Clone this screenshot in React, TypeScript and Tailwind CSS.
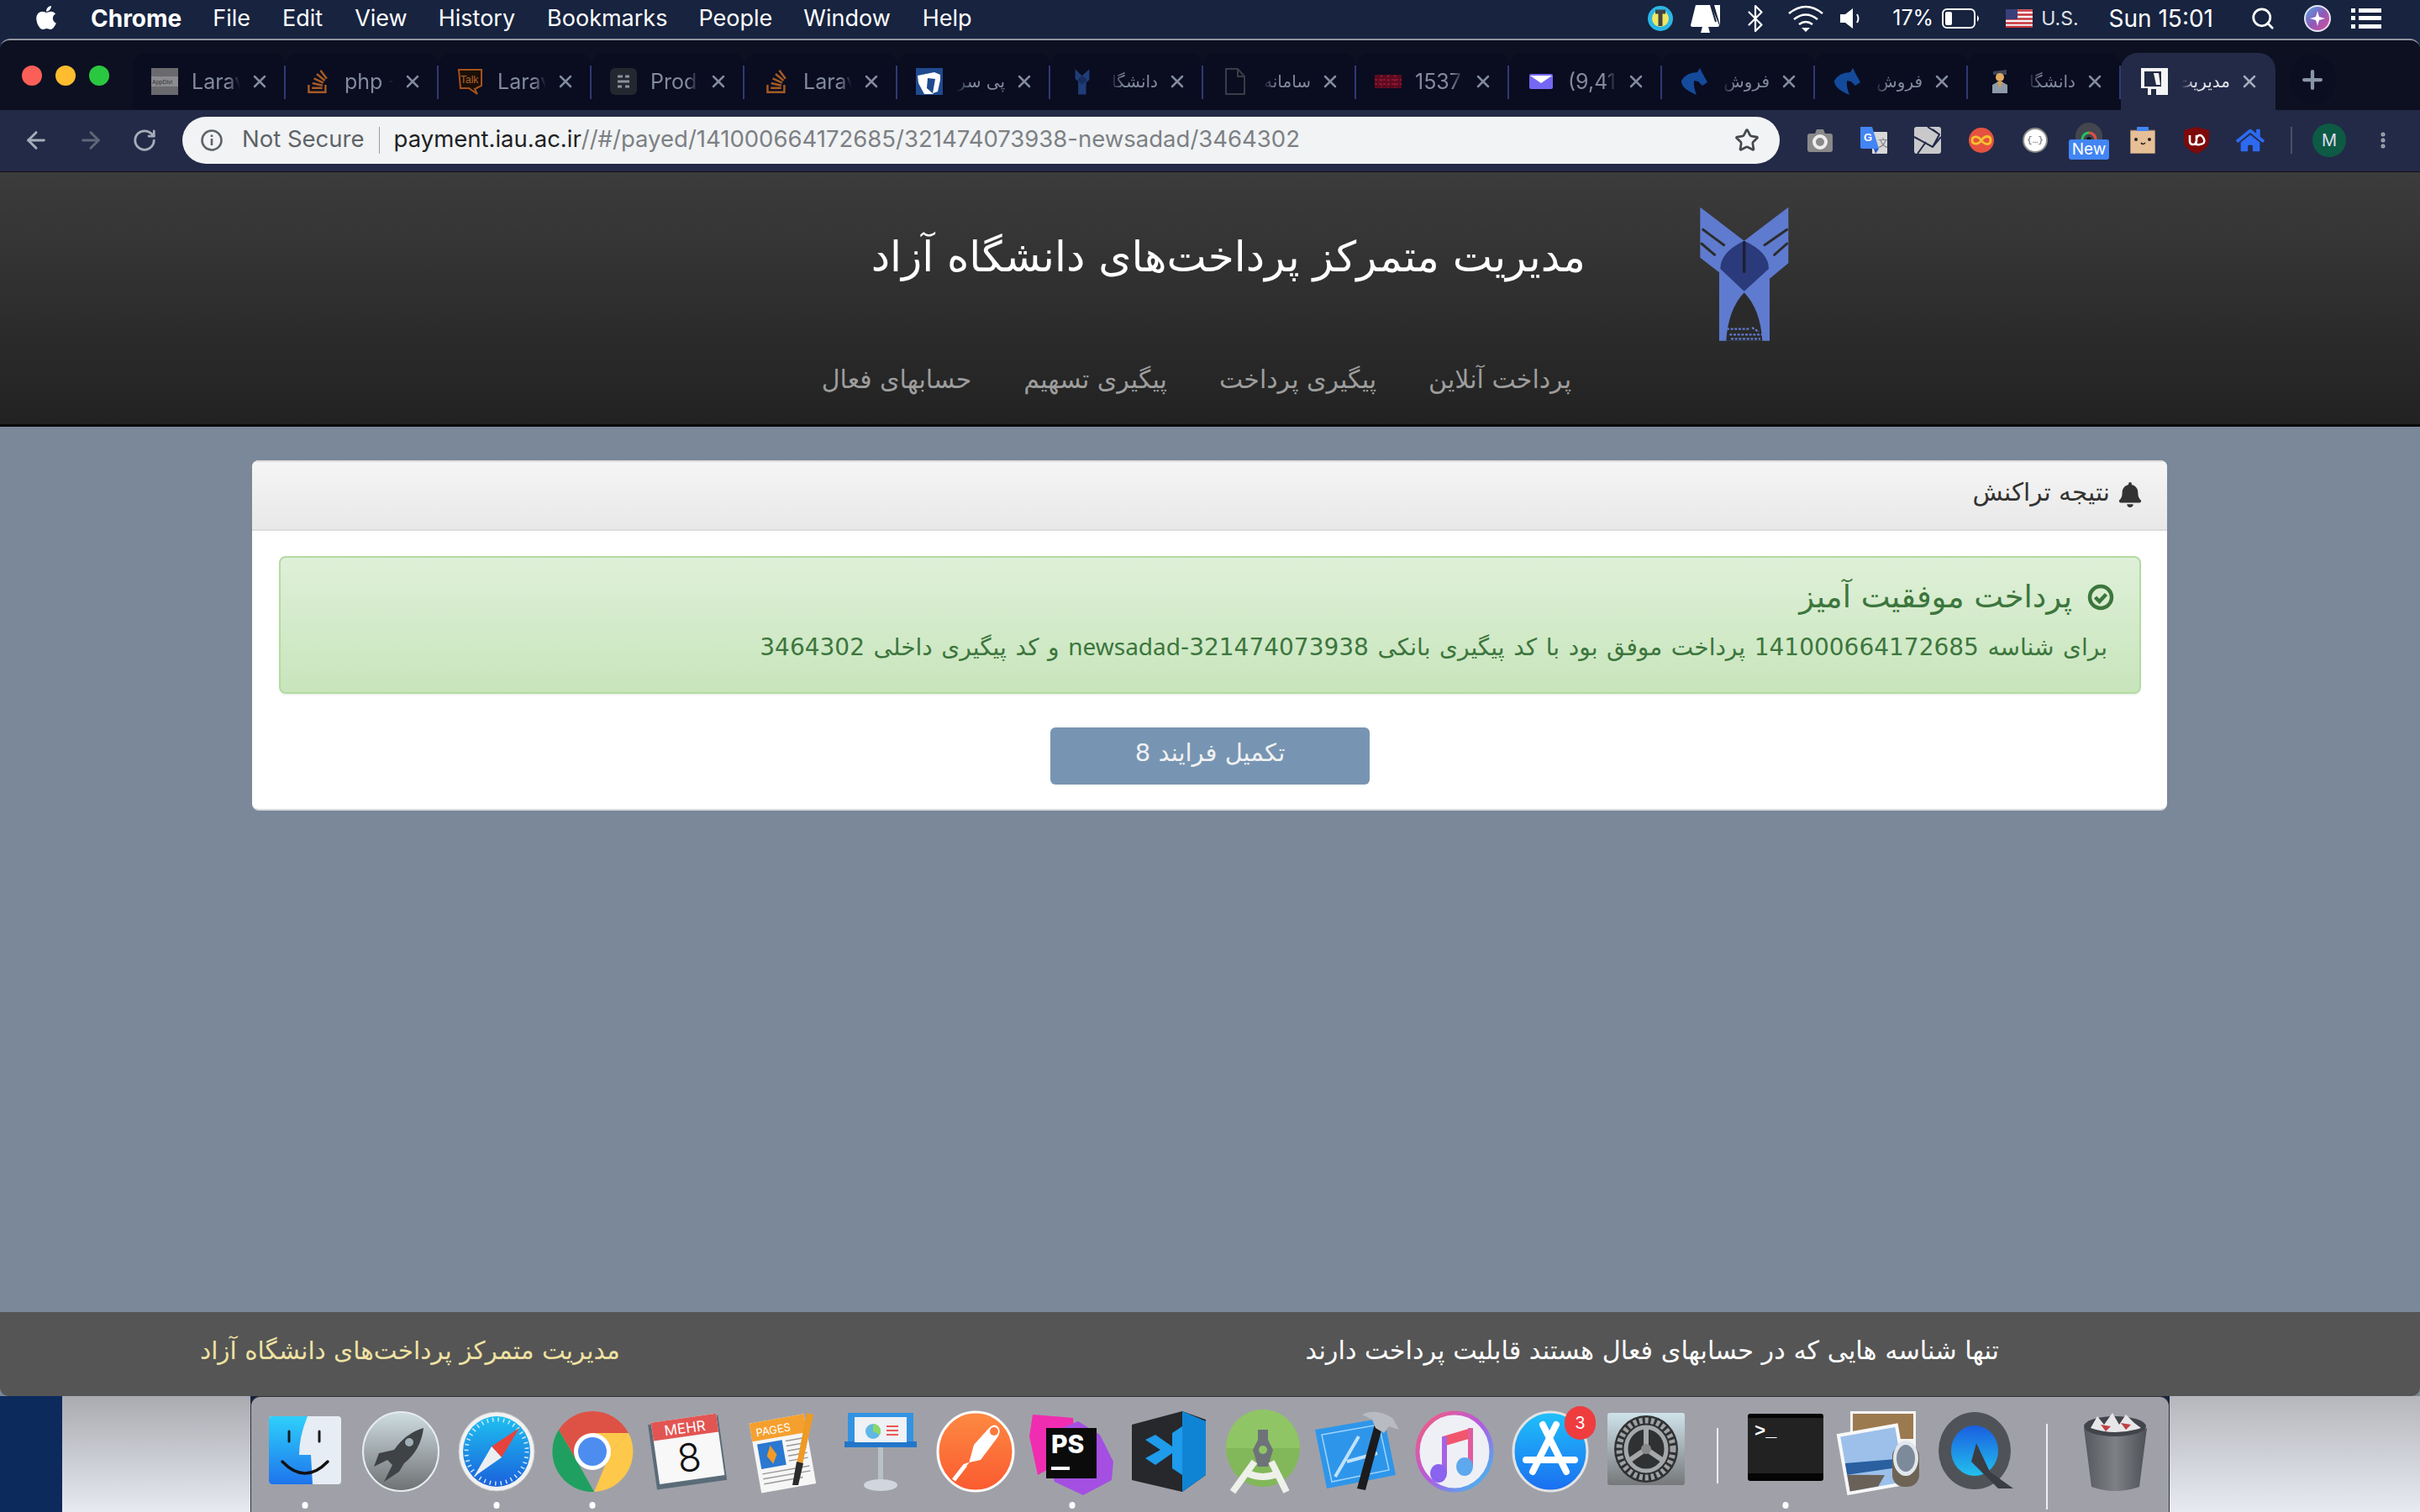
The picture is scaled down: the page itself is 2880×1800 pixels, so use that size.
import React from "react";
import { ArrowLeft, ArrowRight, RotateCw, Star, Plus, X, Search, Bluetooth, EllipsisVertical } from "lucide-react";
import { FaBell, FaStackOverflow, FaApple, FaHome } from "react-icons/fa";

const dv = "[font-family:'DejaVu_Sans',sans-serif]";

function Logo({ className = "" }: { className?: string }) {
  return (
    <svg viewBox="0 0 405 540" className={className}>
      <path d="M40 35L197 155L355 35V235L288 290V512H108V268L40 215Z" fill="#5f7bcf" />
      <path d="M50 115L125 170M45 165L92 205M350 115L270 170M350 165L305 205" stroke="#2c2c2c" strokeWidth="9" strokeLinecap="round" />
      <path d="M197 155Q112 195 112 255L197 335L285 255Q285 195 197 155Z" fill="#2a3a7b" />
      <path d="M197 160V265" stroke="#1d1f2e" strokeWidth="10" strokeLinecap="round" />
      <path d="M197 340Q140 400 133 512H262Q255 400 197 340Z" fill="#2a2a2a" />
      <path d="M135 470H215M225 465L250 480M145 490H262M150 505H255" stroke="#5f7bcf" strokeWidth="7" strokeDasharray="9 5" />
    </svg>
  );
}

function Fav({ kind }: { kind: string }) {
  const box = "w-[32px] h-[32px] shrink-0";
  if (kind === "app")
    return (
      <svg viewBox="0 0 32 32" className={box}>
        <rect width="32" height="32" fill="#6a6a6e" />
        <rect y="10" width="32" height="12" fill="#8b8b8f" />
        <text x="1" y="19" fontSize="7" fill="#333" fontFamily="Liberation Sans">AppDivi</text>
      </svg>
    );
  if (kind === "so") return <FaStackOverflow className={box + " text-[#a35a24]"} />;
  if (kind === "talk")
    return (
      <svg viewBox="0 0 32 32" className={box}>
        <path d="M2 2H29V21L21 25L24 31L14 24H4Z" fill="#1a0f08" stroke="#a4521c" strokeWidth="2" />
        <text x="4" y="18" fontSize="12" fill="#b5652a" fontFamily="Liberation Sans">Talk</text>
      </svg>
    );
  if (kind === "prod")
    return (
      <svg viewBox="0 0 32 32" className={box}>
        <rect width="32" height="32" rx="6" fill="#23272f" />
        <path d="M9 10H15M18 10H23M9 16H23M9 22H14M18 22H23" stroke="#8b919c" strokeWidth="3" />
      </svg>
    );
  if (kind === "pey")
    return (
      <svg viewBox="0 0 32 32" className={box}>
        <rect width="32" height="32" fill="#1f4a8f" />
        <path d="M2 9L22 5L29 8V14L26 28L20 30L23 13L14 12L13 24L21 31H10L3 18Z" fill="#fff" />
      </svg>
    );
  if (kind === "iau")
    return (
      <svg viewBox="0 0 405 540" className={box}>
        <path d="M60 20L197 155L345 20V235L280 290V530H120V268L60 215Z" fill="#1f3d78" />
        <path d="M197 160Q115 200 115 255L197 335L285 255Q285 200 197 160Z" fill="#162c5a" />
      </svg>
    );
  if (kind === "file")
    return (
      <svg viewBox="0 0 32 32" className={box} fill="none" stroke="#3a3d46" strokeWidth="2">
        <path d="M5 1H19L27 10V31H5Z" />
        <path d="M19 1V10H27" />
      </svg>
    );
  if (kind === "red")
    return (
      <svg viewBox="0 0 32 32" className={box}>
        <rect y="8" width="32" height="16" fill="#5c0b1f" />
        <path d="M0 14H32M0 19H32M8 8V24M16 8V24M24 8V24" stroke="#8a1530" strokeWidth="2" strokeDasharray="3 2" />
      </svg>
    );
  if (kind === "mail")
    return (
      <svg viewBox="0 0 32 32" className={box}>
        <rect x="2" y="7" width="28" height="18" rx="2" fill="#7468f3" />
        <path d="M3 9H29L16 18Z" fill="#fff" />
      </svg>
    );
  if (kind === "horse")
    return (
      <svg viewBox="0 0 32 32" className={box}>
        <path d="M23 0L20 5Q7 5 1 15Q0 24 19 32Q15 22 16 15L21 16L26 21L32 17L26 6Z" fill="#144a9b" />
      </svg>
    );
  if (kind === "cop")
    return (
      <svg viewBox="0 0 32 32" className={box}>
        <path d="M8 4L24 2V8H8Z" fill="#3e4555" />
        <circle cx="16" cy="11" r="5" fill="#e0ab60" />
        <path d="M7 30V20L16 15L25 20V30Z" fill="#8e9aa8" />
        <path d="M13 16H19L16 24Z" fill="#d7a04c" />
      </svg>
    );
  return (
    <svg viewBox="0 0 32 32" className={box}>
      <rect width="32" height="32" fill="#f4f4f4" />
      <rect x="4" y="4" width="20" height="18" fill="#222a44" />
      <path d="M15 6H21L23 20H18Z" fill="#f4f4f4" />
      <path d="M0 24H8V32H0ZM12 25H18V32H12Z" fill="#222a44" />
    </svg>
  );
}

const tabs = [
  ["app", "Laravel"],
  ["so", "php - How"],
  ["talk", "Laravel"],
  ["prod", "Product"],
  ["so", "Laravel"],
  ["pey", "پی سرویس"],
  ["iau", "دانشگاه آزاد"],
  ["file", "سامانه"],
  ["red", "1537"],
  ["mail", "(9,412)"],
  ["horse", "فروش"],
  ["horse", "فروش"],
  ["cop", "دانشگاه آزاد"],
];

function Tab({ kind, title }: { kind: string; title: string }) {
  const rtl = /[\u0600-\u06ff]/.test(title);
  return (
    <div className="relative w-[182px] h-[68px] shrink-0 bg-[#0a0c20] rounded-t-[16px] flex items-center pl-[22px] border-r-0">
      <Fav kind={kind} />
      <div
        dir={rtl ? "rtl" : "ltr"}
        className={
          "ml-[16px] w-[58px] overflow-hidden whitespace-nowrap leading-[36px] text-[#818b9b] " +
          (rtl
            ? "[mask-image:linear-gradient(to_left,#000_70%,transparent)] [font-family:'DejaVu_Sans',sans-serif] text-[20px]"
            : "[mask-image:linear-gradient(to_right,#000_75%,transparent)] font-['Inter'] text-[25px]")
        }
      >
        {title}
      </div>
      <X className="ml-[11px] w-[24px] h-[24px] text-[#818b9b]" strokeWidth={2.5} />
      <span className="absolute right-0 top-[15px] h-[40px] w-[2px] bg-[#2e3a75]" />
    </div>
  );
}

function TitleBar() {
  return (
    <div className="h-[83px] bg-[#0d1021] flex items-end">
      <div className="w-[158px] h-full shrink-0 flex gap-[16px] pl-[26px] pt-[30px]">
        <span className="w-[24px] h-[24px] rounded-full bg-[#fb5f57]" />
        <span className="w-[24px] h-[24px] rounded-full bg-[#febc2e]" />
        <span className="w-[24px] h-[24px] rounded-full bg-[#2ac840]" />
      </div>
      {tabs.map((t, i) => (
        <Tab key={i} kind={t[0]} title={t[1]} />
      ))}
      <div className="w-[184px] h-[68px] shrink-0 bg-[#232a47] rounded-t-[20px] flex items-center pl-[24px]">
        <Fav kind="doc" />
        <div dir="rtl" className="ml-[16px] w-[58px] overflow-hidden whitespace-nowrap text-[20px] leading-[36px] text-[#e2e5ea] [font-family:'DejaVu_Sans',sans-serif] [mask-image:linear-gradient(to_left,#000_75%,transparent)]">
          مدیریت متمرکز
        </div>
        <X className="ml-[11px] w-[24px] h-[24px] text-[#a3acba]" strokeWidth={2.5} />
      </div>
      <div className="ml-[16px] mb-[6px] w-[56px] h-[60px] rounded-full bg-[#0b0e20] flex items-center justify-center">
        <Plus className="w-[34px] h-[34px] text-[#8a95a6]" strokeWidth={3} />
      </div>
    </div>
  );
}

function ToolIcon({ children }: { children: React.ReactNode }) {
  return <div className="relative w-[64px] h-[56px] shrink-0 flex items-center justify-center">{children}</div>;
}

function ToolBar() {
  return (
    <div className="h-[74px] bg-[#232a47] flex items-start pt-[8px] border-b-[1px] border-[#111]">
      <div className="w-[217px] h-[56px] shrink-0 flex items-center pl-[27px] text-[#a5adb9]">
        <ArrowLeft className="w-[32px] h-[32px]" strokeWidth={2.2} />
        <ArrowRight className="ml-[33px] w-[32px] h-[32px] text-[#5f6678]" strokeWidth={2.2} />
        <RotateCw className="ml-[33px] w-[30px] h-[30px]" strokeWidth={2.2} />
      </div>
      <div className="w-[1901px] h-[56px] shrink-0 rounded-full bg-[#f1f3f4] flex items-center pl-[22px] pr-[24px] font-['Inter'] text-[27.5px] whitespace-nowrap">
        <svg viewBox="0 0 26 26" className="w-[26px] h-[26px] shrink-0" fill="none" stroke="#5f6368" strokeWidth="2.6">
          <circle cx="13" cy="13" r="11.5" />
          <path d="M13 11V19M13 6.5V9" />
        </svg>
        <span className="ml-[23px] text-[#5f6368] -mt-[2px]">Not Secure</span>
        <span className="ml-[17px] w-[1px] h-[32px] bg-[#9a9da1]" />
        <span className="ml-[17px] text-[#202124] -mt-[2px]">payment.iau.ac.ir</span>
        <span className="text-[#7c8084] -mt-[2px]">//#/payed/141000664172685/321474073938-newsadad/3464302</span>
        <Star className="ml-auto w-[30px] h-[30px] text-[#45484d]" strokeWidth={2.2} />
      </div>
      <div className="ml-[16px] flex items-center">
        <ToolIcon>
          <svg viewBox="0 0 30 28" className="w-[30px] h-[28px]">
            <path d="M3 6H9L11 1H19L21 6H27A3 3 0 0 1 30 9V25A3 3 0 0 1 27 28H3A3 3 0 0 1 0 25V9A3 3 0 0 1 3 6Z" fill="#8a8a8a" />
            <circle cx="15" cy="16" r="7" fill="none" stroke="#eee" strokeWidth="4" />
          </svg>
        </ToolIcon>
        <ToolIcon>
          <svg viewBox="0 0 32 32" className="w-[32px] h-[32px]">
            <rect x="14" y="6" width="18" height="26" rx="1" fill="#d8d8d8" />
            <path d="M0 0H14L22 26H2A2 2 0 0 1 0 24Z" fill="#4285f4" />
            <path d="M16 26H22L18 32Z" fill="#2a56c6" />
            <text x="4" y="17" fontSize="13" fontWeight="700" fill="#fff" fontFamily="Liberation Sans">G</text>
            <text x="21" y="24" fontSize="12" fill="#777" fontFamily="Noto Sans CJK SC">文</text>
          </svg>
        </ToolIcon>
        <ToolIcon>
          <svg viewBox="0 0 32 32" className="w-[32px] h-[32px]">
            <rect width="32" height="32" rx="3" fill="#c9c9cc" />
            <path d="M0 12L22 24L32 12M4 32L14 18M22 3L30 9L22 24M16 0L30 9" fill="none" stroke="#232a47" strokeWidth="2" />
          </svg>
        </ToolIcon>
        <ToolIcon>
          <svg viewBox="0 0 30 30" className="w-[30px] h-[30px]">
            <circle cx="15" cy="15" r="15" fill="#e6523f" />
            <path d="M15 15C11 9 4 10 4 15S11 21 15 15S26 9 26 15S19 21 15 15Z" fill="none" stroke="#f5c22f" strokeWidth="2.8" />
          </svg>
        </ToolIcon>
        <ToolIcon>
          <div className="w-[30px] h-[30px] rounded-full bg-white border-[2px] border-[#8a8a8a] flex items-center justify-center text-[11px] text-[#666] font-['Liberation_Mono'] whitespace-nowrap">
            {"{…}"}
          </div>
        </ToolIcon>
        <ToolIcon>
          <svg viewBox="0 0 32 22" className="absolute top-[7px] left-[16px] w-[32px] h-[22px]">
            <path d="M0 22V16A16 16 0 0 1 32 16V22Z" fill="#43464f" />
            <path d="M8 20A8 8 0 0 1 24 20" fill="none" stroke="#22c55e" strokeWidth="3" />
            <path d="M16 12A8 8 0 0 1 24 20" fill="none" stroke="#ef4444" strokeWidth="3" />
            <circle cx="16" cy="20" r="3" fill="#111" />
          </svg>
          <span className="absolute top-[27px] left-[8px] w-[48px] h-[24px] rounded-[3px] bg-[#4285f4] text-white text-[19px] leading-[24px] text-center font-['Inter']">New</span>
        </ToolIcon>
        <ToolIcon>
          <svg viewBox="0 0 30 32" className="w-[30px] h-[32px]">
            <rect y="4" width="30" height="28" fill="#e6bf97" stroke="#6b5b4e" strokeWidth="1" />
            <rect x="8" y="0" width="14" height="5" rx="1" fill="#4285f4" />
            <circle cx="7" cy="15" r="2" fill="#222" />
            <circle cx="23" cy="15" r="2" fill="#222" />
            <path d="M13 19Q15 22 18 19" fill="none" stroke="#222" strokeWidth="1.6" />
          </svg>
        </ToolIcon>
        <ToolIcon>
          <svg viewBox="0 0 30 32" className="w-[30px] h-[32px]">
            <path d="M15 0L30 4V16Q30 26 15 32Q0 26 0 16V4Z" fill="#7d0a0a" />
            <path d="M7 10V17Q7 21 11 21T15 17V10M15 14Q16 10 19 10T24 15T19 21T15 17" fill="none" stroke="#fff" strokeWidth="2.6" />
          </svg>
        </ToolIcon>
        <ToolIcon>
          <FaHome className="w-[34px] h-[34px] text-[#2d6af0]" />
        </ToolIcon>
        <span className="ml-[16px] w-[2px] h-[32px] bg-[#4a5064]" />
        <div className="ml-[24px] w-[40px] h-[40px] rounded-full bg-[#0d5a45] text-[#dde] text-[20px] flex items-center justify-center font-['Inter']">M</div>
        <EllipsisVertical className="ml-[32px] w-[24px] h-[34px] text-[#a3a7ae]" strokeWidth={3} />
      </div>
    </div>
  );
}

function MenuBar() {
  return (
    <div className="h-[46px] shrink-0 bg-[#17233f] flex items-center text-white font-['Inter'] text-[27px] whitespace-nowrap pb-[2px]">
      <FaApple className="ml-[41px] w-[28px] h-[32px] -mt-[2px]" />
      <span className="ml-[39px] font-bold text-[28px]">Chrome</span>
      <span className="ml-[37px]">File</span>
      <span className="ml-[38px]">Edit</span>
      <span className="ml-[38px]">View</span>
      <span className="ml-[37px]">History</span>
      <span className="ml-[38px]">Bookmarks</span>
      <span className="ml-[37px]">People</span>
      <span className="ml-[37px]">Window</span>
      <span className="ml-[38px]">Help</span>
      <div className="ml-auto flex items-center pr-[46px]">
        <svg viewBox="0 0 30 30" className="w-[30px] h-[30px]">
          <circle cx="15" cy="15" r="15" fill="#2ab6e6" />
          <circle cx="15" cy="15" r="10" fill="#f0e761" />
          <path d="M9 7H21M15 7V24" stroke="#444" strokeWidth="5" />
        </svg>
        <svg viewBox="0 0 36 36" className="ml-[21px] w-[36px] h-[36px]">
          <path d="M6 2L24 2L34 26Q34 28 32 28H2Q0 28 0 26Z" fill="#fff" />
          <path d="M28 2L35 2L35 26L28 2" fill="#fff" />
          <path d="M24 2L30 22" stroke="#17233f" strokeWidth="2" fill="none" />
          <path d="M14 28H21L23 35H12Z" fill="#fff" />
        </svg>
        <Bluetooth className="ml-[23px] w-[36px] h-[36px] text-white" strokeWidth={1.5} />
        <svg viewBox="0 0 42 32" className="ml-[21px] w-[42px] h-[32px]" fill="none" stroke="#fff" strokeWidth="2.6">
          <path d="M1 10Q21 -6 41 10M7 17Q21 6 35 17M13 23Q21 17 29 23" />
          <path d="M16 27H26L21 32Z" fill="#fff" stroke="none" />
        </svg>
        <svg viewBox="0 0 26 26" className="ml-[20px] w-[26px] h-[26px]">
          <path d="M0 8H6L15 1V25L6 18H0Z" fill="#fff" />
          <path d="M20 8Q23 13 20 18" fill="none" stroke="#fff" strokeWidth="2" />
        </svg>
        <span className="ml-[36px] text-[25px]">17%</span>
        <svg viewBox="0 0 46 24" className="ml-[10px] w-[46px] h-[24px]">
          <rect x="1" y="1" width="38" height="22" rx="5" fill="none" stroke="#fff" strokeWidth="2" />
          <rect x="4" y="4" width="8" height="16" rx="2" fill="#fff" />
          <path d="M42 8Q46 12 42 16Z" fill="#fff" />
        </svg>
        <svg viewBox="0 0 32 22" className="ml-[30px] w-[32px] h-[22px]">
          <rect width="32" height="22" fill="#f4f4f4" />
          <path d="M0 1.5H32M0 6.5H32M0 11.5H32M0 16.5H32M0 21H32" stroke="#c8323c" strokeWidth="2.4" />
          <rect width="14" height="12" fill="#3a3f7a" />
        </svg>
        <span className="ml-[10px] text-[23px] text-[#dfe2e8]">U.S.</span>
        <span className="ml-[36px] text-[28px]">Sun 15:01</span>
        <Search className="ml-[44px] w-[30px] h-[30px]" strokeWidth={2.2} />
        <svg viewBox="0 0 32 32" className="ml-[34px] w-[32px] h-[32px]">
          <defs>
            <linearGradient id="siri" x1="0" y1="0" x2="1" y2="1">
              <stop offset="0" stopColor="#4aa8e8" />
              <stop offset="0.5" stopColor="#8d5ab8" />
              <stop offset="1" stopColor="#e04a9c" />
            </linearGradient>
          </defs>
          <circle cx="16" cy="16" r="15" fill="url(#siri)" stroke="#e4e4ee" strokeWidth="2" />
          <path d="M16 7L18 14L25 16L18 18L16 25L14 18L7 16L14 14Z" fill="#fff" />
        </svg>
        <svg viewBox="0 0 36 24" className="ml-[24px] w-[36px] h-[24px]" fill="#fff">
          <rect width="5" height="5" />
          <rect y="9" width="5" height="5" />
          <rect y="19" width="5" height="5" />
          <rect x="9" width="27" height="5" />
          <rect x="9" y="9" width="27" height="5" />
          <rect x="9" y="19" width="27" height="5" />
        </svg>
      </div>
    </div>
  );
}

function Page() {
  return (
    <div dir="rtl" className={"flex-1 flex flex-col bg-[#7a8899] " + dv}>
      <div className="h-[303px] shrink-0 bg-gradient-to-b from-[#3c3c3c] to-[#222222] border-b-[3px] border-[#0a0a0a]">
        <div className="flex items-start pr-[735px] pt-[30px] h-[210px]">
          <Logo className="w-[135px] h-[180px] shrink-0" />
          <div className="mr-[123px] mt-[35px] text-[50.2px] leading-[72px] text-white whitespace-nowrap">مدیریت متمرکز پرداخت‌های دانشگاه آزاد</div>
        </div>
        <div className="mt-[17px] flex pr-[1010px] gap-[62px] text-[30px] leading-[40px] text-[#9d9d9d] whitespace-nowrap">
          <span>پرداخت آنلاین</span>
          <span>پیگیری پرداخت</span>
          <span>پیگیری تسهیم</span>
          <span>حسابهای فعال</span>
        </div>
      </div>
      <div className="flex-1 pt-[40px] pl-[300px] pr-[301px]">
        <div className="h-[417px] rounded-[8px] bg-white overflow-hidden border-b-[2px] border-[#d8dade]">
          <div className="h-[84px] bg-gradient-to-b from-[#f5f5f5] to-[#e8e8e8] border-t-[2px] border-b-[2px] border-[#dddddd] flex items-center pr-[30px] gap-[10px] text-[#333]">
            <FaBell className="w-[28px] h-[30px] -mt-[3px]" />
            <span className="text-[29.5px] leading-[40px] -mt-[8px]">نتیجه تراکنش</span>
          </div>
          <div className="pr-[31px] pl-[32px] pt-[30px]">
            <div className="h-[164px] rounded-[8px] border-[2px] border-[#b2dba1] bg-gradient-to-b from-[#dff0d8] to-[#c8e5bc] text-[#3c763d] pr-[30px] shadow-[0_2px_2px_rgba(0,0,0,0.05)]">
              <div className="flex items-center gap-[18px] h-[50px] mt-[22px]">
                <svg viewBox="0 0 32 32" className="w-[32px] h-[32px] shrink-0" fill="none" stroke="#3c763d">
                  <circle cx="16" cy="16" r="13" strokeWidth="4.5" />
                  <path d="M9.5 16L14.5 21L22.5 12.5" strokeWidth="4.5" />
                </svg>
                <span className="text-[37px] leading-[50px]">پرداخت موفقیت آمیز</span>
              </div>
              <div className="mt-[13px] pr-[8px] text-[28px] leading-[40px] whitespace-nowrap [word-spacing:1.7px]">
                برای شناسه 141000664172685 پرداخت موفق بود با کد پیگیری بانکی 321474073938-<span className="font-['Noto_Sans']">newsadad</span> و کد پیگیری داخلی 3464302
              </div>
            </div>
            <div className="flex justify-center mt-[40px]">
              <div className="w-[380px] h-[68px] rounded-[6px] bg-[#7795b3] text-[#f1f1f1] text-[29px] leading-[60px] text-center">تکمیل فرایند 8</div>
            </div>
          </div>
        </div>
      </div>
      <div className="h-[100px] shrink-0 bg-[#555555] rounded-b-[10px] flex items-center whitespace-nowrap pr-[501px] pb-[8px]">
        <span className="text-white text-[30.3px]">تنها شناسه هایی که در حسابهای فعال هستند قابلیت پرداخت دارند</span>
        <span className="mr-auto ml-[238px] text-[#efe2a2] text-[29.5px]">مدیریت متمرکز پرداخت‌های دانشگاه آزاد</span>
      </div>
    </div>
  );
}

function DockItem({ cls, dot, children }: { cls: string; dot?: boolean; children: React.ReactNode }) {
  return (
    <div className={"relative h-[96px] shrink-0 " + cls}>
      {children}
      {dot && <span className="absolute left-1/2 -translate-x-1/2 -bottom-[20px] w-[7px] h-[8px] rounded-full bg-white" />}
    </div>
  );
}

function Dock() {
  const s = "w-full h-full overflow-visible";
  return (
    <div className="w-[2284px] h-[138px] shrink-0 bg-[#a0a1a8] rounded-t-[12px] border-t-[1px] border-l-[1px] border-r-[1px] border-[#2f3036] flex items-start pt-[17px] pl-[21px]">
      <DockItem cls="w-[86px]" dot>
        <svg viewBox="0 0 86 96" className={s}>
          <defs>
            <linearGradient id="fb" x1="0" y1="0" x2="0" y2="1">
              <stop offset="0" stopColor="#2ed0fb" />
              <stop offset="1" stopColor="#1e74ec" />
            </linearGradient>
          </defs>
          <rect y="6" width="86" height="81" rx="4" fill="#e6edf5" />
          <path d="M4 6H46Q36 30 36 52H50L52 87H4Q0 87 0 83V10Q0 6 4 6Z" fill="url(#fb)" />
          <path d="M24 24V36M60 24V36" stroke="#1a1a1a" strokeWidth="3" strokeLinecap="round" />
          <path d="M16 60Q43 88 70 60" fill="none" stroke="#111" strokeWidth="3.5" strokeLinecap="round" />
        </svg>
      </DockItem>
      <DockItem cls="ml-[25px] w-[92px]">
        <svg viewBox="0 0 92 96" className={s}>
          <defs>
            <linearGradient id="rk" x1="0" y1="0" x2="0" y2="1">
              <stop offset="0" stopColor="#cfdde2" />
              <stop offset="1" stopColor="#6f7173" />
            </linearGradient>
          </defs>
          <ellipse cx="46" cy="48" rx="45" ry="47" fill="url(#rk)" stroke="#e6ecef" strokeWidth="2" />
          <path d="M73 20Q52 26 38 46L20 50L14 66L30 58L36 64L26 84L44 72L50 62Q70 46 73 20Z" fill="#3f4345" />
          <circle cx="56" cy="37" r="5" fill="#9fb0b6" />
        </svg>
      </DockItem>
      <DockItem cls="ml-[22px] w-[92px]" dot>
        <svg viewBox="0 0 92 96" className={s}>
          <defs>
            <linearGradient id="sf" x1="0" y1="0" x2="0" y2="1">
              <stop offset="0" stopColor="#1ec0f0" />
              <stop offset="1" stopColor="#1a60dc" />
            </linearGradient>
          </defs>
          <ellipse cx="46" cy="48" rx="45" ry="47" fill="#f2f2f2" stroke="#c8c8c8" />
          <ellipse cx="46" cy="48" rx="40" ry="42" fill="url(#sf)" />
          <ellipse cx="46" cy="48" rx="36" ry="38" fill="none" stroke="#cfe8fb" strokeWidth="5" strokeDasharray="1.5 5" />
          <path d="M73 20L52 55L40 42Z" fill="#e8423c" />
          <path d="M19 78L40 42L52 55Z" fill="#eceff2" />
        </svg>
      </DockItem>
      <DockItem cls="ml-[20px] w-[96px]" dot>
        <svg viewBox="0 0 96 96" className={s}>
          <path d="M48 0A48 48 0 0 1 91 26H48ZM8 22A48 48 0 0 1 48 0V48Z" fill="#de5246" />
          <path d="M91 26A48 48 0 0 1 50 96L70 48Z" fill="#fec84a" />
          <path d="M8 22L30 60L50 96A48 48 0 0 1 8 22Z" fill="#20a060" />
          <path d="M48 26H91L70 48Z" fill="#fec84a" />
          <path d="M8 22L48 26L30 60Z" fill="#de5246" />
          <circle cx="48" cy="48" r="22" fill="#fff" />
          <circle cx="48" cy="48" r="17" fill="#4e8df0" />
        </svg>
      </DockItem>
      <DockItem cls="ml-[19px] w-[92px]">
        <svg viewBox="0 0 92 96" className={s}>
          <g transform="rotate(-8 46 48)">
            <rect x="4" y="10" width="84" height="78" fill="#5a6c78" />
            <rect x="8" y="8" width="78" height="74" fill="#f8f8f8" />
            <rect x="8" y="8" width="78" height="22" fill="#e25552" />
            <text x="47" y="26" fontSize="17" textAnchor="middle" fill="#fff" fontFamily="Inter">MEHR</text>
            <text x="47" y="72" fontSize="46" textAnchor="middle" fill="#111" fontFamily="Inter" fontWeight="300">8</text>
          </g>
        </svg>
      </DockItem>
      <DockItem cls="ml-[26px] w-[86px]">
        <svg viewBox="0 0 86 96" className={s}>
          <g transform="rotate(-10 43 48)">
            <rect x="8" y="8" width="66" height="84" fill="#f6f6f6" />
            <rect x="8" y="8" width="66" height="22" fill="#f5a02e" />
            <text x="14" y="25" fontSize="13" fill="#fff" fontFamily="Inter">PAGES</text>
            <rect x="13" y="34" width="30" height="30" fill="#2a78d0" />
            <path d="M28 38L34 50L28 60L22 50Z" fill="#f39a26" />
            <path d="M47 36H70M47 42H70M47 48H70M47 54H70M47 60H70M13 70H70M13 76H70M13 82H60" stroke="#999" strokeWidth="1.5" />
          </g>
          <path d="M70 2L78 4L60 86L54 84Z" fill="#ee9a26" />
          <path d="M58 60L66 62L60 88L53 88Z" fill="#2b2b2b" />
        </svg>
      </DockItem>
      <DockItem cls="ml-[29px] w-[86px]">
        <svg viewBox="0 0 86 96" className={s}>
          <rect x="4" y="2" width="78" height="36" fill="#3393e2" />
          <rect x="0" y="36" width="86" height="7" fill="#2276c9" />
          <rect x="12" y="7" width="62" height="30" fill="#eef1f5" />
          <circle cx="34" cy="24" r="9" fill="#60b8e6" />
          <path d="M34 24V15A9 9 0 0 1 42 28Z" fill="#8bd867" />
          <path d="M50 18H64M50 23H64M50 28H64" stroke="#e55" strokeWidth="2" />
          <rect x="40" y="43" width="6" height="42" fill="#b8c0c8" />
          <ellipse cx="43" cy="88" rx="20" ry="7" fill="#cfd6de" />
        </svg>
      </DockItem>
      <DockItem cls="ml-[24px] w-[92px]">
        <svg viewBox="0 0 92 96" className={s}>
          <defs>
            <linearGradient id="pm" x1="0" y1="0" x2="0" y2="1">
              <stop offset="0" stopColor="#fd8a42" />
              <stop offset="1" stopColor="#fb5a30" />
            </linearGradient>
          </defs>
          <ellipse cx="46" cy="48" rx="45" ry="47" fill="url(#pm)" stroke="#fff" strokeWidth="3" />
          <path d="M72 18Q78 24 70 34L52 58L34 62L20 80L38 62L44 40L62 20Q68 14 72 18Z" fill="#fff" />
          <circle cx="68" cy="24" r="5" fill="#fb7a3c" />
          <path d="M20 82L34 64" stroke="#fff" strokeWidth="5" />
        </svg>
      </DockItem>
      <DockItem cls="ml-[18px] w-[102px]" dot>
        <svg viewBox="0 0 102 96" className={s}>
          <path d="M4 4L52 8L56 50L10 76L0 30Z" fill="#f02db0" />
          <path d="M34 22L58 12L84 28L100 60L98 82L64 100L30 84L20 50Z" fill="#a44fe2" />
          <rect x="20" y="20" width="60" height="60" fill="#0b0b0b" />
          <text x="26" y="50" fontSize="30" fontWeight="800" fill="#fff" fontFamily="Inter">PS</text>
          <rect x="26" y="66" width="22" height="4" fill="#fff" />
        </svg>
      </DockItem>
      <DockItem cls="ml-[20px] w-[88px]">
        <svg viewBox="0 0 88 96" className={s}>
          <path d="M0 16L60 0L88 10V76L60 96L0 82Z" fill="#26282c" />
          <path d="M60 0L88 12V76L60 96Z" fill="#0f84d4" />
          <path d="M60 18V76L48 68V50L28 64L16 56L34 46L16 34L28 28L48 42V26Z" fill="#1e9bea" />
        </svg>
      </DockItem>
      <DockItem cls="ml-[24px] w-[88px]">
        <svg viewBox="0 0 88 96" className={s}>
          <ellipse cx="44" cy="44" rx="44" ry="46" fill="#82b85a" />
          <path d="M0 44A44 46 0 0 1 88 44Z" fill="#90c566" />
          <path d="M38 22H50V34L56 46L50 66H38L32 46L38 34Z" fill="#6d7378" />
          <circle cx="44" cy="46" r="5" fill="#90c566" />
          <path d="M34 60L8 96M54 60L72 96M26 74Q44 82 62 74" fill="none" stroke="#eef0ea" strokeWidth="8" />
        </svg>
      </DockItem>
      <DockItem cls="ml-[18px] w-[102px]">
        <svg viewBox="0 0 102 96" className={s}>
          <path d="M0 22L82 8L96 76L14 92Z" fill="#2e96ea" />
          <path d="M8 28L76 16L88 70L20 84Z" fill="none" stroke="#9fd3fb" strokeWidth="1.5" />
          <path d="M24 78L52 30M38 60L74 50" stroke="#bfe2fc" strokeWidth="4" />
          <path d="M72 12L82 12L60 94L50 92Z" fill="#1c1c1e" />
          <path d="M56 4Q72 -4 92 8L100 22L88 18L82 26L72 20L68 10Q60 6 56 4Z" fill="#b8bcc2" />
        </svg>
      </DockItem>
      <DockItem cls="ml-[18px] w-[93px]">
        <svg viewBox="0 0 93 96" className={s}>
          <defs>
            <linearGradient id="im" x1="0" y1="0" x2="1" y2="1">
              <stop offset="0" stopColor="#fb5c74" />
              <stop offset="0.5" stopColor="#b35be0" />
              <stop offset="1" stopColor="#2ec8f5" />
            </linearGradient>
          </defs>
          <ellipse cx="46" cy="48" rx="44" ry="46" fill="#eef0f6" stroke="url(#im)" strokeWidth="5" />
          <path d="M32 30L66 20V32L32 42Z" fill="#f2566c" />
          <rect x="31" y="30" width="6" height="44" fill="#a763e4" />
          <rect x="62" y="20" width="6" height="46" fill="#e05c9c" />
          <ellipse cx="27" cy="74" rx="10" ry="11" fill="#8a63ee" />
          <ellipse cx="58" cy="66" rx="10" ry="11" fill="#5ea8ee" />
        </svg>
      </DockItem>
      <DockItem cls="ml-[22px] w-[90px]">
        <svg viewBox="0 0 90 96" className={s}>
          <defs>
            <linearGradient id="as" x1="0" y1="0" x2="0" y2="1">
              <stop offset="0" stopColor="#20c0fa" />
              <stop offset="1" stopColor="#1a6ef0" />
            </linearGradient>
          </defs>
          <ellipse cx="45" cy="48" rx="44" ry="47" fill="url(#as)" stroke="#e3e3e3" strokeWidth="3" />
          <path d="M52 16L24 72M36 16L64 72M16 58H74" stroke="#fff" strokeWidth="8" strokeLinecap="round" />
        </svg>
        <span className="absolute -top-[6px] -right-[9px] w-[37px] h-[40px] rounded-full bg-[#ef3c3f] text-white text-[20px] leading-[40px] text-center font-['Inter']">3</span>
      </DockItem>
      <DockItem cls="ml-[23px] w-[92px]">
        <svg viewBox="0 0 92 96" className={s}>
          <defs>
            <linearGradient id="st" x1="0" y1="0" x2="0" y2="1">
              <stop offset="0" stopColor="#cfe3ea" />
              <stop offset="1" stopColor="#76787a" />
            </linearGradient>
          </defs>
          <rect y="2" width="92" height="86" rx="3" fill="url(#st)" />
          <ellipse cx="46" cy="45" rx="38" ry="40" fill="#2f3133" />
          <ellipse cx="46" cy="45" rx="32" ry="34" fill="none" stroke="#9ea1a3" strokeWidth="7" strokeDasharray="4 3" />
          <ellipse cx="46" cy="45" rx="24" ry="26" fill="none" stroke="#a5a8aa" strokeWidth="5" />
          <path d="M46 45V20M46 45L24 60M46 45L68 60" stroke="#a5a8aa" strokeWidth="6" />
          <circle cx="46" cy="45" r="6" fill="#888" />
        </svg>
      </DockItem>
      <span className="ml-[38px] mt-[20px] w-[2px] h-[66px] bg-[#eeeef0] shrink-0" />
      <DockItem cls="ml-[35px] w-[90px]" dot>
        <svg viewBox="0 0 90 96" className={s}>
          <rect y="3" width="90" height="80" rx="3" fill="#050505" />
          <rect y="8" width="90" height="66" fill="#222222" />
          <text x="8" y="30" fontSize="22" fontWeight="700" fill="#fff" fontFamily="Liberation Mono">&gt;_</text>
        </svg>
      </DockItem>
      <DockItem cls="ml-[20px] w-[95px]">
        <svg viewBox="0 0 95 96" className={s}>
          <rect x="12" y="0" width="78" height="70" fill="#f4f4f4" />
          <rect x="15" y="3" width="72" height="30" fill="#9c7a50" />
          <g transform="rotate(-10 40 60)">
            <rect x="2" y="20" width="74" height="74" fill="#f8f8f8" />
            <rect x="6" y="24" width="66" height="66" fill="#9cc0ea" />
            <path d="M6 56L72 62V72L6 70Z" fill="#2a5fa0" />
            <path d="M6 70L50 78L40 90H6Z" fill="#6a6258" />
          </g>
          <rect x="62" y="40" width="32" height="50" rx="14" fill="#6e6455" />
          <ellipse cx="78" cy="56" rx="15" ry="21" fill="#e0e6ec" />
          <ellipse cx="78" cy="56" rx="11" ry="16" fill="#7c8a9a" />
        </svg>
      </DockItem>
      <DockItem cls="ml-[21px] w-[94px]">
        <svg viewBox="0 0 94 96" className={s}>
          <defs>
            <linearGradient id="qt" x1="0" y1="0" x2="0" y2="1">
              <stop offset="0" stopColor="#1a5ee0" />
              <stop offset="1" stopColor="#22c0ee" />
            </linearGradient>
          </defs>
          <ellipse cx="44" cy="47" rx="43" ry="46" fill="#4f5358" />
          <ellipse cx="44" cy="47" rx="28" ry="30" fill="url(#qt)" />
          <path d="M46 38L62 72L90 92H72L40 60Z" fill="#3a3d42" />
        </svg>
      </DockItem>
      <span className="ml-[35px] mt-[15px] w-[2px] h-[102px] bg-[#eeeef0] shrink-0" />
      <DockItem cls="ml-[43px] w-[75px]">
        <svg viewBox="0 0 75 96" className={s}>
          <defs>
            <linearGradient id="tr" x1="0" y1="0" x2="1" y2="0">
              <stop offset="0" stopColor="#55585c" />
              <stop offset="0.5" stopColor="#7d8084" />
              <stop offset="1" stopColor="#4d5054" />
            </linearGradient>
          </defs>
          <path d="M0 20Q37 34 75 20L66 90Q37 100 9 90Z" fill="url(#tr)" />
          <ellipse cx="37" cy="18" rx="37" ry="12" fill="#41444a" />
          <path d="M8 20L16 6L24 16L34 2L42 16L50 4L60 14L68 20Q37 30 8 20Z" fill="#e7e7ea" />
          <path d="M20 16L26 24L32 18ZM44 14L50 22L56 16Z" fill="#c04040" />
        </svg>
      </DockItem>
    </div>
  );
}

export default function App() {
  return (
    <div className="w-[2880px] h-[1800px] overflow-hidden flex flex-col bg-[#17233f]">
      <MenuBar />
      <div className="h-[1616px] shrink-0 flex flex-col rounded-t-[12px] overflow-hidden border-t-[2px] border-[#8f939c]">
        <TitleBar />
        <ToolBar />
        <Page />
      </div>
      <div className="flex-1 flex">
        <div className="w-[74px] shrink-0 bg-[#0c2a5c]" />
        <div className="w-[224px] shrink-0 bg-gradient-to-b from-[#a9abb0] to-[#e8eaf2]" />
        <Dock />
        <div className="flex-1 bg-gradient-to-b from-[#b5b7bc] to-[#e8eaf2]" />
      </div>
    </div>
  );
}
